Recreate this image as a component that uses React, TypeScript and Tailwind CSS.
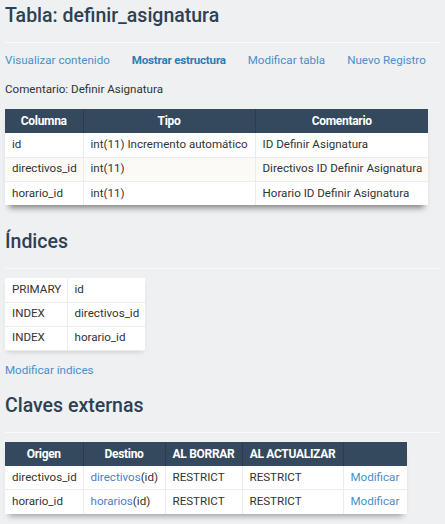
import React from 'react';

const font = { fontFamily: 'Roboto, "Noto Sans", sans-serif' };

const cell = 'h-6 px-[7px] border-l border-[#ececec] first:border-l-0 whitespace-nowrap overflow-hidden';
const head = 'h-6 px-[5px] text-center text-[12px] font-bold text-white tracking-[-0.3px] border-l border-[#2b3c4e] first:border-l-0 whitespace-nowrap';

function Heading({ children }: { children: React.ReactNode }) {
  return <h2 className="text-[19.5px] leading-6 font-medium text-[#2e4053]">{children}</h2>;
}

function Rule() {
  return <div className="h-px bg-[#f9fafb]" />;
}

const columnas = [
  ['id', 'int(11) Incremento automático', 'ID Definir Asignatura'],
  ['directivos_id', 'int(11)', 'Directivos ID Definir Asignatura'],
  ['horario_id', 'int(11)', 'Horario ID Definir Asignatura'],
];

const indices = [
  ['PRIMARY', 'id'],
  ['INDEX', 'directivos_id'],
  ['INDEX', 'horario_id'],
];

const claves = [
  ['directivos_id', 'directivos', 'RESTRICT', 'RESTRICT'],
  ['horario_id', 'horarios', 'RESTRICT', 'RESTRICT'],
];

export default function App() {
  return (
    <div className="min-h-screen w-[445px] h-[524px] overflow-hidden bg-[#eef0f1] text-[11.6px] text-[#333]" style={font}>
      <div className="px-[5px]">
        <h1 className="mt-1 text-[19.5px] leading-6 font-medium text-[#2e4053]">Tabla: definir_asignatura</h1>
        <div className="mt-[14px]">
          <Rule />
        </div>

        <nav className="mt-[9px] flex gap-[22px] leading-4">
          <a className="text-[#4a8fcb]">Visualizar contenido</a>
          <a className="font-bold text-[#2b7cb9] tracking-[-0.2px]">Mostrar estructura</a>
          <a className="text-[#4a8fcb]">Modificar tabla</a>
          <a className="text-[#4a8fcb]">Nuevo Registro</a>
        </nav>

        <p className="mt-[13px] leading-4">Comentario: Definir Asignatura</p>

        <table className="mt-3 w-[423px] table-fixed border-collapse bg-white shadow-[0_7px_6px_-4px_rgba(0,0,0,0.45)]">
          <thead className="bg-[#34495e]">
            <tr>
              <th className={`${head} w-[78px]`}>Columna</th>
              <th className={`${head} w-[172px]`}>Tipo</th>
              <th className={`${head} w-[173px]`}>Comentario</th>
            </tr>
          </thead>
          <tbody>
            {columnas.map((r, i) => (
              <tr key={i} className={`${i > 0 ? 'border-t border-[#ececec]' : ''} ${i === 1 ? 'bg-[#fbfaf6]' : ''}`}>
                {r.map((c, j) => (
                  <td key={j} className={cell}>{c}</td>
                ))}
              </tr>
            ))}
          </tbody>
        </table>

        <div className="mt-[25px]">
          <Heading>Índices</Heading>
        </div>
        <div className="mt-[14px]">
          <Rule />
        </div>

        <table className="mt-[9px] w-[140px] table-fixed border-collapse bg-white shadow-[0_3px_5px_-2px_rgba(0,0,0,0.15)]">
          <tbody>
            {indices.map((r, i) => (
              <tr key={i} className="border-b border-[#ececec]">
                <td className={`${cell} w-[62px]`}>{r[0]}</td>
                <td className={`${cell} w-[78px]`}>{r[1]}</td>
              </tr>
            ))}
          </tbody>
        </table>

        <a className="mt-[11px] block leading-4 text-[#4a8fcb]">Modificar índices</a>

        <div className="mt-[16px]">
          <Heading>Claves externas</Heading>
        </div>
        <div className="mt-[14px]">
          <Rule />
        </div>

        <table className="mt-[9px] w-[402px] table-fixed border-collapse bg-white shadow-[0_6px_6px_-4px_rgba(0,0,0,0.35)]">
          <thead className="bg-[#34495e]">
            <tr>
              <th className={`${head} w-[78px]`}>Origen</th>
              <th className={`${head} w-[82px]`}>Destino</th>
              <th className={`${head} w-[77px]`}>AL BORRAR</th>
              <th className={`${head} w-[101px]`}>AL ACTUALIZAR</th>
              <th className={`${head} w-[64px]`}></th>
            </tr>
          </thead>
          <tbody>
            {claves.map((r, i) => (
              <tr key={i} className={i > 0 ? 'border-t border-[#ececec]' : ''}>
                <td className={cell}>{r[0]}</td>
                <td className={cell}>
                  <a className="text-[#4a7fc8]">{r[1]}</a>(id)
                </td>
                <td className={cell}>{r[2]}</td>
                <td className={cell}>{r[3]}</td>
                <td className={cell}>
                  <a className="text-[#4a8fcb]">Modificar</a>
                </td>
              </tr>
            ))}
          </tbody>
        </table>
      </div>
    </div>
  );
}
